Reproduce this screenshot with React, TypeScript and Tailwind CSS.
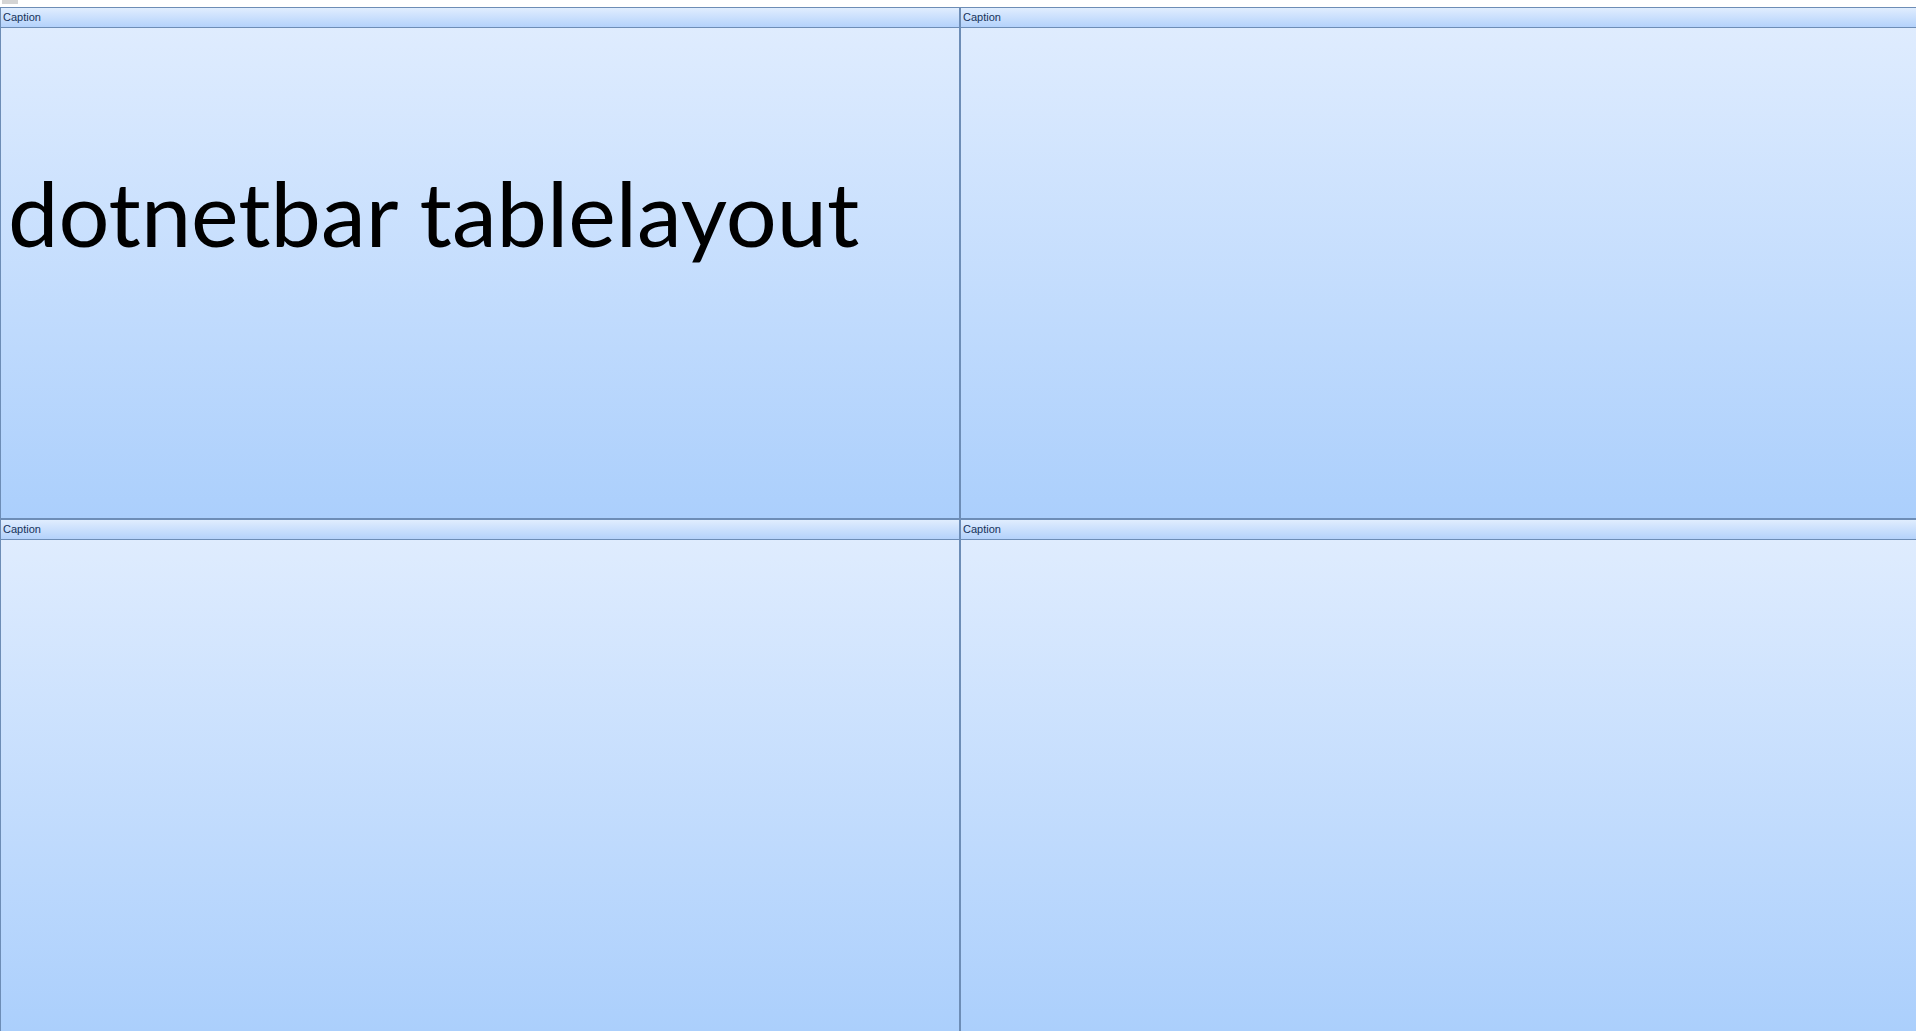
function Cell({ children, right, bottom }: { children?: React.ReactNode; right?: boolean; bottom?: boolean }) {
  return (
    <div
      className={
        "flex min-h-0 flex-col border-t border-l border-[#6d8db6] " +
        (right ? "border-r-0 " : "border-r ") +
        (bottom ? "border-b-0" : "border-b")
      }
    >
      <div className="flex h-[20px] shrink-0 items-center border-b border-[#6d8db6] bg-gradient-to-b from-[#e0edfe] to-[#b4d2fb] px-[2px] font-['Liberation_Sans',sans-serif] text-[11px] leading-none text-[#15325a]">
        Caption
      </div>
      <div className="min-h-0 flex-1 bg-gradient-to-b from-[#dfecfe] to-[#abcffc]">{children}</div>
    </div>
  );
}

export default function App() {
  return (
    <div className="flex h-[1031px] w-[1916px] flex-col overflow-hidden bg-white">
      <div className="h-[7px] shrink-0">
        <div className="ml-[2px] h-[4px] w-[16px] bg-[#d4d4d4]" />
      </div>
      <div className="grid min-h-0 flex-1 grid-cols-[960px_1fr] grid-rows-[512px_1fr]">
        <Cell>
          <div className="whitespace-nowrap pl-[7px] pt-[139px] font-['Lato',sans-serif] text-[90px] leading-none text-black">
            dotnetbar tablelayout
          </div>
        </Cell>
        <Cell right />
        <Cell bottom />
        <Cell right bottom />
      </div>
    </div>
  );
}
